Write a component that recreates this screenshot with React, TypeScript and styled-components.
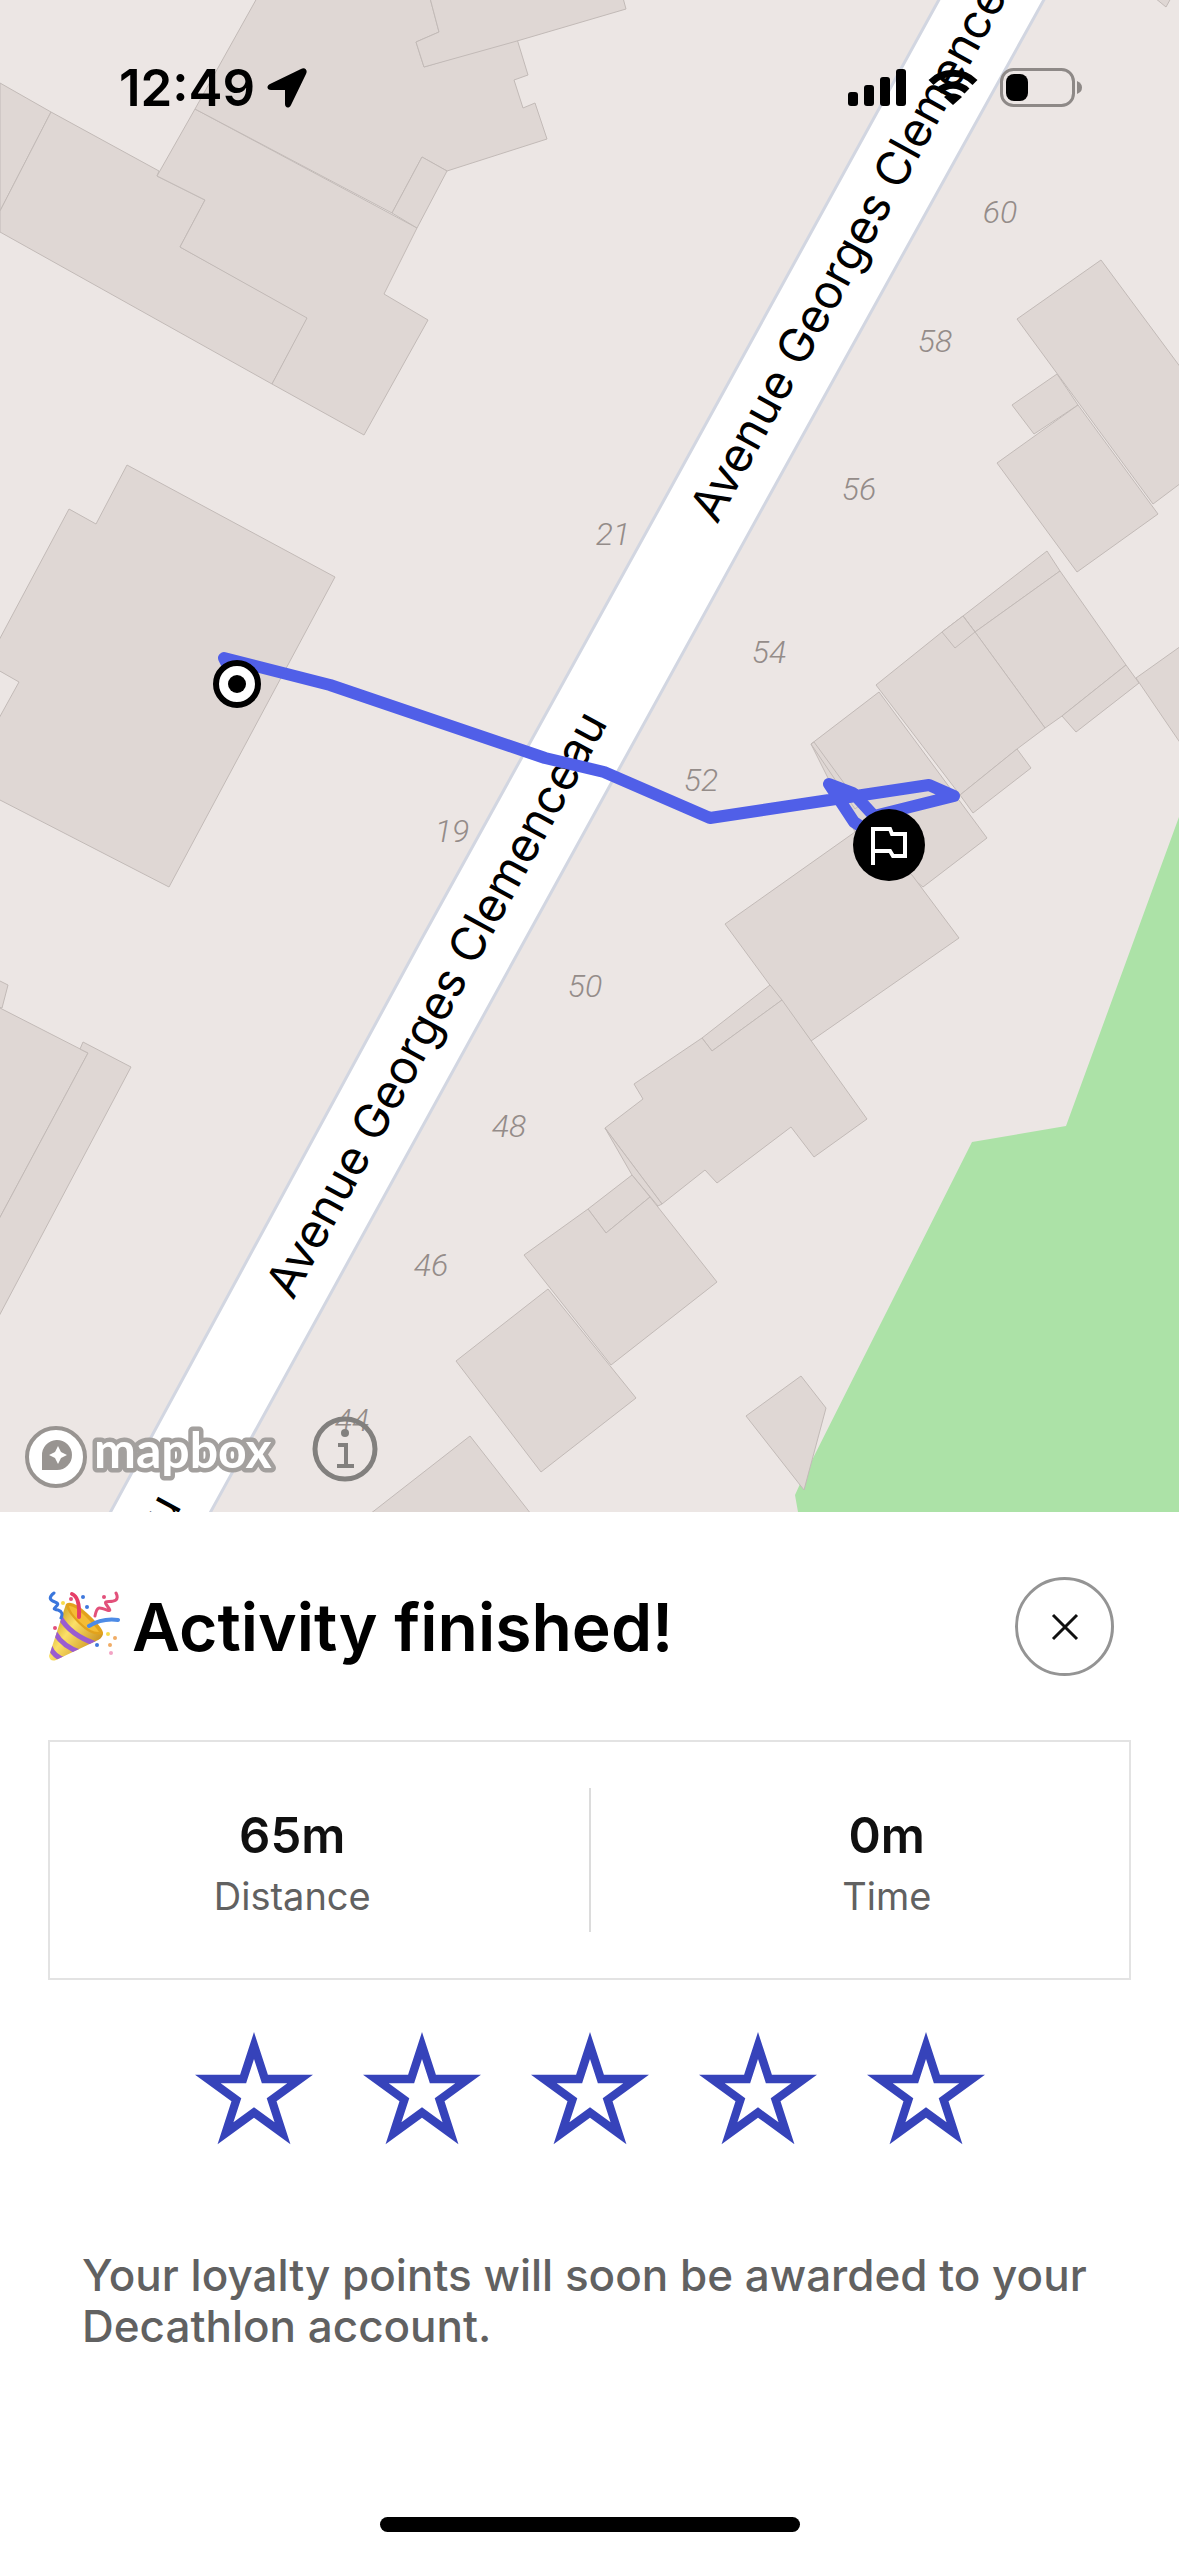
import React, { useState } from 'react';
import styled, { createGlobalStyle } from 'styled-components';

const GlobalStyle = createGlobalStyle`
  *, *::before, *::after { box-sizing: border-box; }
  body { margin: 0; background: #fff; }
`;

const ui = "Inter, 'Liberation Sans', sans-serif";

const Page = styled.main`
  min-height: 100vh;
  display: flex;
  flex-direction: column;
  background: #fff;
  color: #000;
  font-family: ${ui};
`;

const MapPane = styled.section`
  position: relative;
  background: #ece6e4;
`;

const MapCanvas = styled.svg`
  display: block;
  width: 100%;
  height: auto;
`;

const StreetLabel = styled.text`
  font: 400 47px Inter, sans-serif;
  fill: #000;
`;

const HouseNumber = styled.text`
  font: italic 300 32px Roboto, sans-serif;
  fill: #948c89;
  text-anchor: middle;
`;

const StatusBar = styled.header`
  position: absolute;
  inset: 0 0 auto;
  display: flex;
  justify-content: space-between;
  align-items: center;
  padding: 56px 96px 0 119px;
`;

const StatusGroup = styled.div<{ $gap: number }>`
  display: flex;
  align-items: center;
  gap: ${(p) => p.$gap}px;
`;

const Clock = styled.time`
  font-size: 51px;
  font-weight: 600;
  line-height: 64px;
`;

const MapCredits = styled.footer`
  position: absolute;
  left: 24px;
  bottom: 23px;
  display: flex;
  align-items: center;
  gap: 32px;
`;

const LogoLink = styled.a`
  display: flex;
  padding-top: 16px;
`;

const Wordmark = styled.text`
  font: 700 50px Lato, sans-serif;
  fill: #fff;
  stroke: #a3a09e;
  stroke-width: 9px;
  stroke-linejoin: round;
  paint-order: stroke;
`;

const InfoButton = styled.button`
  display: flex;
  padding: 0;
  border: 0;
  background: none;
`;

const Sheet = styled.section`
  flex: 1;
  display: flex;
  flex-direction: column;
  padding: 65px 48px 24px;
`;

const TitleRow = styled.div`
  display: flex;
  align-items: center;
  justify-content: space-between;
  padding-right: 17px;
`;

const Title = styled.h1`
  display: flex;
  align-items: center;
  gap: 12px;
  margin: 0;
  font-size: 66px;
  font-weight: 600;
  line-height: 80px;
`;

const CloseButton = styled.button`
  display: grid;
  place-items: center;
  width: 99px;
  height: 99px;
  padding: 0;
  border: 3px solid #949494;
  border-radius: 50%;
  background: #fff;
`;

const Stats = styled.dl`
  display: grid;
  grid-template-columns: 1fr 2px 1fr;
  column-gap: 54px;
  margin: 64px 0 0;
  padding: 46px 0;
  border: 2px solid #e3e3e3;

  &::before {
    content: '';
    grid-area: 1 / 2;
    background: #dcdcdc;
  }
`;

const Stat = styled.div`
  display: flex;
  flex-direction: column-reverse;
  align-items: center;
  justify-content: center;
  height: 144px;
  padding-top: 8px;
`;

const StatValue = styled.dd`
  margin: 0;
  color: #101010;
  font-size: 49px;
  font-weight: 600;
  line-height: 64px;
`;

const StatLabel = styled.dt`
  color: #616161;
  font-size: 38px;
  line-height: 56px;
`;

const Rating = styled.fieldset`
  display: flex;
  justify-content: center;
  gap: 50px;
  margin: 52px 0 0;
  padding: 0;
  border: 0;
`;

const StarOption = styled.label`
  position: relative;
  display: flex;
  cursor: pointer;
`;

const StarInput = styled.input`
  position: absolute;
  inset: 0;
  margin: 0;
  opacity: 0;
`;

const Notice = styled.p`
  margin: 104px 32px 0 34px;
  color: #616161;
  font-size: 44px;
  font-weight: 500;
  line-height: 51px;
`;

const HomeIndicator = styled.div`
  align-self: center;
  width: 420px;
  height: 15px;
  margin-top: auto;
  border-radius: 8px;
  background: #000;
`;

const buildings = [
  '0,83 51,112 0,211',
  '51,112 159,171 157,176 205,200 180,247 307,317 307,319 272,384 0,232 0,211',
  '195,109 417,228 384,294 428,320 364,435 272,384 307,318 180,247 205,200 157,176',
  '257,-2 195,109 392,213 422,157 447,171 547,139 535,103 523,108 514,80 528,75 517,39 424,67 416,42 439,32 430,-2',
  '422,157 447,171 417,228 392,213',
  '430,-2 439,32 416,42 424,67 517,41 626,9 623,-2',
  '127,465 335,577 169,887 -2,799 -2,720 19,682 -2,670 -2,642 69,509 96,524',
  '-2,980 8,985 2,1008 -2,1007',
  '-2,1007 88,1053 -2,1221',
  '80,1049 83,1042 131,1067 -2,1318 -2,1221 88,1053',
  '1155,-2 1166,7 1171,-2',
  '1017,319 1101,260 1181,368 1181,483 1153,504',
  '1057,374 1012,405 1034,434 1078,405',
  '1078,405 997,463 1077,572 1158,514',
  '1047,551 1060,571 975,632 963,616',
  '1060,571 1126,665 1062,716 1045,728 975,632',
  '1126,665 1139,683 1076,732 1062,716',
  '963,616 975,632 1045,728 1017,749 960,795 876,685 942,632',
  '942,632 963,616 975,632 955,648',
  '1017,749 1031,768 973,813 960,795',
  '879,692 811,744 855,832 923,887 987,838',
  '814,742 811,744 855,809 860,805',
  '855,832 725,924 811,1041 959,938 912,875',
  '1181,646 1136,678 1181,744',
  '770,985 702,1038 712,1051 782,1000',
  '782,1000 867,1119 814,1157 791,1127 717,1183 705,1170 662,1204 605,1128 643,1099 634,1084 702,1038 712,1051',
  '605,1128 632,1175 658,1206 662,1204',
  '632,1175 588,1209 606,1233 650,1197',
  '588,1209 524,1255 611,1365 717,1282 650,1197 606,1233',
  '548,1289 456,1361 541,1472 636,1398',
  '470,1436 370,1514 531,1514',
];

const houseNumbers: [string, number, number][] = [
  ['60', 1000, 223],
  ['58', 935, 352],
  ['56', 859, 500],
  ['21', 613, 545],
  ['54', 769, 663],
  ['52', 701, 791],
  ['19', 452, 842],
  ['50', 585, 997],
  ['48', 509, 1137],
  ['46', 431, 1276],
  ['44', 352, 1431],
];

const streetLabels = [
  { x: 717, y: 525, angle: -61.2 },
  { x: 293, y: 1301, angle: -61.4 },
  { x: -133, y: 2084, angle: -61.4 },
];

function StreetMap() {
  return (
    <MapCanvas viewBox="0 0 1179 1512" role="img" aria-label="Map of the activity route">
      <path d="M1179 817 1066 1126 972 1142 800 1484 795 1495 798 1512H1179Z" fill="#ace2a7" />
      <g fill="#dfd7d4" stroke="#c2bab7" strokeWidth="1">
        {buildings.map((points) => (
          <polygon key={points} points={points} />
        ))}
        <polygon points="801,1376 746,1416 804,1490 826,1408" />
      </g>
      <path
        d="M941 -4 664 500 421 940 104 1524 204 1524 525 940 767 500 1046 -4Z"
        fill="#fff"
        stroke="#d2d6e1"
        strokeWidth="3"
      />
      {houseNumbers.map(([label, x, y]) => (
        <HouseNumber key={label} x={x} y={y}>
          {label}
        </HouseNumber>
      ))}
      {streetLabels.map(({ x, y, angle }) => (
        <StreetLabel key={y} transform={`translate(${x} ${y}) rotate(${angle})`}>
          Avenue Georges Clemenceau
        </StreetLabel>
      ))}
      <path
        d="M237 684 224 658 330 685 545 758 604 772 710 818 929 785 954 796 874 816 853 793 829 784 854 822 889 845"
        fill="none"
        stroke="#505fe8"
        strokeWidth="12"
        strokeLinecap="round"
        strokeLinejoin="round"
      />
      <circle cx="237" cy="684" r="21" fill="#fff" stroke="#000" strokeWidth="6" />
      <circle cx="237" cy="684" r="9" />
      <circle cx="889" cy="845" r="36" />
      <path
        d="M873 865V829H890L892 834H905V856H893L890 851H873"
        fill="none"
        stroke="#fff"
        strokeWidth="4"
      />
    </MapCanvas>
  );
}

function LocationArrow() {
  return (
    <svg width="40" height="40" viewBox="0 0 40 40" aria-hidden="true">
      <path d="M34 1C38-1 41 2 39 6L24 37C22 41 18 40 18 36V22H4C0 22-1 18 3 16Z" />
    </svg>
  );
}

function StatusIcons() {
  return (
    <StatusGroup $gap={22}>
      <svg width="58" height="38" viewBox="0 0 58 38" aria-hidden="true">
        <rect x="0" y="23" width="10" height="14" rx="3" />
        <rect x="16" y="16" width="10" height="21" rx="3" />
        <rect x="32" y="8" width="10" height="29" rx="3" />
        <rect x="48" y="0" width="10" height="37" rx="3" />
      </svg>
      <svg width="50" height="38" viewBox="0 0 50 38" aria-hidden="true">
        <g fill="none" stroke="#000" strokeWidth="7">
          <path d="M3 13.500A31 31 0 0 1 47 13.500" />
          <path d="M11 22A20 20 0 0 1 39 22" />
        </g>
        <path d="M25 36 16 28A13 13 0 0 1 34 28Z" />
      </svg>
      <svg width="83" height="40" viewBox="0 0 83 40" aria-hidden="true">
        <rect x="1.500" y="1.500" width="72" height="36" rx="12" fill="none" stroke="#8e8987" strokeWidth="3" />
        <rect x="6" y="6" width="22" height="27" rx="8" />
        <path d="M77 13Q82 15 82 19.500T77 26Z" fill="#8e8987" />
      </svg>
    </StatusGroup>
  );
}

function PartyPopper() {
  return (
    <svg width="72" height="72" viewBox="0 0 72 72" aria-hidden="true">
      <defs>
        <linearGradient id="cone" x1="0" y1="0.300" x2="0.800" y2="0.900">
          <stop offset="0" stopColor="#c99a1c" />
          <stop offset="0.400" stopColor="#fbe068" />
          <stop offset="1" stopColor="#c98f1d" />
        </linearGradient>
        <clipPath id="cone-shape">
          <path d="M18 13 55 43Q54 48 48 50L8 69Q2 71 1 65Z" />
        </clipPath>
      </defs>
      <path d="M18 13 55 43Q54 48 48 50L8 69Q2 71 1 65Z" fill="url(#cone)" />
      <g clipPath="url(#cone-shape)" fill="none" stroke="#9a5cd0" strokeWidth="5">
        <path d="M12 26Q22 44 48 53" />
        <path d="M7 42Q15 56 34 62" />
        <path d="M2 56Q6 66 17 69" />
      </g>
      <path d="M18 13Q24 8 40 23T55 43Q44 46 31 33T18 13Z" fill="#e2a21c" />
      <path d="M21 15Q26 14 37 25T51 41Q42 41 32 31T21 15Z" fill="#f4bd35" />
      <g fill="none" strokeLinecap="round">
        <path d="M24 3Q32 6 31 26" stroke="#e63e67" strokeWidth="4" />
        <path d="M41 35Q54 27 70 29" stroke="#4d8be6" strokeWidth="4" />
        <path d="M6 2Q-2 8 7 11C16 14-1 18 10 19Q16 21 13 27" stroke="#3a76dc" strokeWidth="3" />
        <path d="M68 2C73 12 61 10 58 11S67 22 59 19 49 15 47 25" stroke="#e2507a" strokeWidth="3" />
      </g>
      <g fill="#3f78dc">
        <circle cx="35" cy="6" r="2" />
        <circle cx="39" cy="16" r="2" />
        <circle cx="49" cy="54" r="2" />
      </g>
      <g fill="#e2507a">
        <circle cx="23" cy="8" r="2" />
        <circle cx="56" cy="6" r="2" />
        <circle cx="7" cy="37" r="2" />
      </g>
      <circle cx="15" cy="12" r="2" fill="#f7dc4e" />
      <circle cx="60" cy="43" r="2" fill="#f7dc4e" />
      <circle cx="67" cy="47" r="2" fill="#f0ac65" />
      <circle cx="62" cy="54" r="2" fill="#f0ac65" />
      <circle cx="63" cy="62" r="2" fill="#f3a3c4" />
    </svg>
  );
}

function starPath(cx: number, cy: number, radius: number) {
  const points = Array.from({ length: 10 }, (_, i) => {
    const r = i % 2 ? radius * 0.382 : radius;
    const a = (i * Math.PI) / 5;
    return `${(cx + r * Math.sin(a)).toFixed(2)} ${(cy - r * Math.cos(a)).toFixed(2)}`;
  });
  return `M${points.join('L')}Z`;
}

const STAR_OUTER = starPath(59, 62, 62);
const STAR_INNER = starPath(59, 62, 35);

function Star({ filled }: { filled: boolean }) {
  return (
    <svg width="118" height="114" viewBox="0 0 118 114" aria-hidden="true">
      <path d={filled ? STAR_OUTER : STAR_OUTER + STAR_INNER} fill="#3643ba" fillRule="evenodd" />
    </svg>
  );
}

export default function App() {
  const [rating, setRating] = useState(0);

  return (
    <Page>
      <GlobalStyle />
      <MapPane>
        <StreetMap />
        <StatusBar>
          <StatusGroup $gap={12}>
            <Clock>12:49</Clock>
            <LocationArrow />
          </StatusGroup>
          <StatusIcons />
        </StatusBar>
        <MapCredits>
          <LogoLink href="#mapbox" aria-label="mapbox">
            <svg width="256" height="64" viewBox="0 0 256 64">
              <circle cx="32" cy="32" r="29" fill="#fff" stroke="#989491" strokeWidth="4" />
              <path d="M18 45V31A15 15 0 1 1 33 45Z" fill="#989491" />
              <path d="M34 21 37 27 43 30 37 33 34 39 31 33 25 30 31 27Z" fill="#fff" />
              <Wordmark x="70" y="43">
                mapbox
              </Wordmark>
            </svg>
          </LogoLink>
          <InfoButton type="button" aria-label="Map information">
            <svg width="66" height="66" viewBox="0 0 66 66">
              <circle cx="33" cy="33" r="30" fill="none" stroke="#82807e" strokeWidth="5" />
              <circle cx="33" cy="17" r="4" fill="#82807e" />
              <path d="M26 29H34V50M25 50H42" fill="none" stroke="#82807e" strokeWidth="4" />
            </svg>
          </InfoButton>
        </MapCredits>
      </MapPane>

      <Sheet>
        <TitleRow>
          <Title>
            <PartyPopper />
            Activity finished!
          </Title>
          <CloseButton type="button" aria-label="Close">
            <svg width="28" height="28" viewBox="0 0 28 28" aria-hidden="true">
              <path d="M2 2 26 26M26 2 2 26" stroke="#101010" strokeWidth="3" />
            </svg>
          </CloseButton>
        </TitleRow>

        <Stats>
          <Stat>
            <StatLabel>Distance</StatLabel>
            <StatValue>65m</StatValue>
          </Stat>
          <Stat>
            <StatLabel>Time</StatLabel>
            <StatValue>0m</StatValue>
          </Stat>
        </Stats>

        <Rating aria-label="Rate this activity">
          {[1, 2, 3, 4, 5].map((value) => (
            <StarOption key={value}>
              <StarInput
                type="radio"
                name="rating"
                value={value}
                aria-label={`${value} out of 5`}
                checked={rating === value}
                onChange={() => setRating(value)}
              />
              <Star filled={value <= rating} />
            </StarOption>
          ))}
        </Rating>

        <Notice>Your loyalty points will soon be awarded to your Decathlon account.</Notice>
        <HomeIndicator />
      </Sheet>
    </Page>
  );
}
